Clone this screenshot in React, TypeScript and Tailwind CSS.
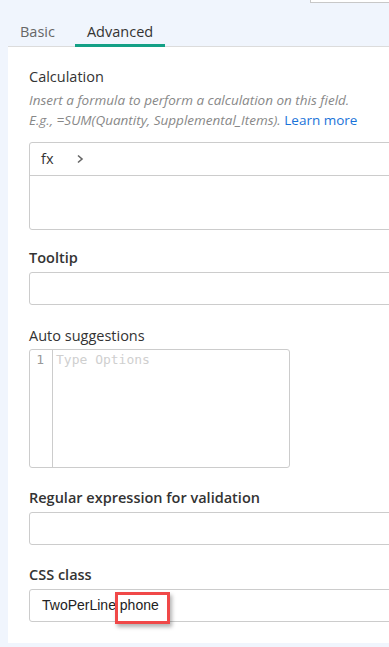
import React from 'react';

const Label: React.FC<{ children: React.ReactNode; bold?: boolean }> = ({ children, bold = true }) => (
    <div className={`text-[14.5px] leading-[20px] text-[#333] ${bold ? 'font-semibold' : 'font-normal'}`}>{children}</div>
);

const TextInput: React.FC<{ children?: React.ReactNode }> = ({ children }) => (
    <div className="h-[33px] -mr-[6px] border border-[#ccc] rounded-l-[3px] bg-white flex items-center px-3 relative">
        {children}
    </div>
);

export default function App() {
    return (
        <div className="w-[389px] h-[647px] overflow-hidden bg-[#f0f5fd] relative" style={{ fontFamily: '"Open Sans", sans-serif' }}>
            {/* input peeking in from above */}
            <div className="absolute left-[310px] top-[-20px] w-[100px] h-[23px] border border-[#c8c8c8] bg-white" />

            <div className="pt-[19px] pl-[8px]">
                <div className="flex border-b border-[#dcdcdc] h-[28px]">
                    <div className="pl-[12px] pr-[20px] pt-[2px] text-[14.5px] text-[#666]">Basic</div>
                    <div className="px-[12px] pt-[2px] text-[14.5px] text-[#333] border-b-[3px] border-[#13a086] h-[28px] mb-[-1px]">Advanced</div>
                </div>

                <div className="bg-white h-[596px] pl-[21px] pt-[20px]">
                    <Label bold={false}>Calculation</Label>
                    <div className="mt-[3px] text-[13.5px] leading-[20px] italic text-[#888]">
                        <div>Insert a formula to perform a calculation on this field.</div>
                        <div>E.g., =SUM(Quantity, Supplemental_Items). <span className="not-italic text-[#1a73d9]">Learn more</span></div>
                    </div>

                    <div className="mt-[12px] -mr-[6px] border border-[#ccc] rounded-l-[3px]">
                        <div className="h-[33px] flex items-center border-b border-[#ccc] pl-[11px] text-[14.5px] text-[#333]">
                            <span>fx</span>
                            <svg className="ml-[23px]" width="8" height="10" viewBox="0 0 8 10" fill="none">
                                <path d="M2 1.5 L6 5 L2 8.5" stroke="#666" strokeWidth="1.6" />
                            </svg>
                        </div>
                        <div className="h-[53px]" />
                    </div>

                    <div className="mt-[18px]"><Label>Tooltip</Label></div>
                    <div className="mt-[4px]"><TextInput /></div>

                    <div className="mt-[21px]"><Label bold={false}>Auto suggestions</Label></div>
                    <div className="mt-[3px] w-[261px] h-[119px] border border-[#ccc] rounded-[3px] flex">
                        <div className="w-[23px] border-r border-[#ccc] text-right pr-[8px] pt-[1px] text-[13px] leading-[17px] text-[#999]" style={{ fontFamily: '"DejaVu Sans Mono", monospace' }}>1</div>
                        <div className="pl-[3px] pt-[1px] text-[13px] leading-[17px] text-[#cfcfcf]" style={{ fontFamily: '"DejaVu Sans Mono", monospace' }}>Type Options</div>
                    </div>

                    <div className="mt-[20px]"><Label>Regular expression for validation</Label></div>
                    <div className="mt-[4px]"><TextInput /></div>

                    <div className="mt-[20px]"><Label>CSS class</Label></div>
                    <div className="mt-[4px]">
                        <TextInput>
                            <span className="text-[14px] text-[#222]" style={{ fontFamily: '"Liberation Sans", Arial, sans-serif' }}>TwoPerLine phone</span>
                            <div className="absolute left-[85px] top-[2px] w-[55px] h-[32px] border-[3px] border-[#f04848] shadow-[2px_3px_4px_rgba(0,0,0,0.3)]" />
                        </TextInput>
                    </div>
                </div>
            </div>
        </div>
    );
}
